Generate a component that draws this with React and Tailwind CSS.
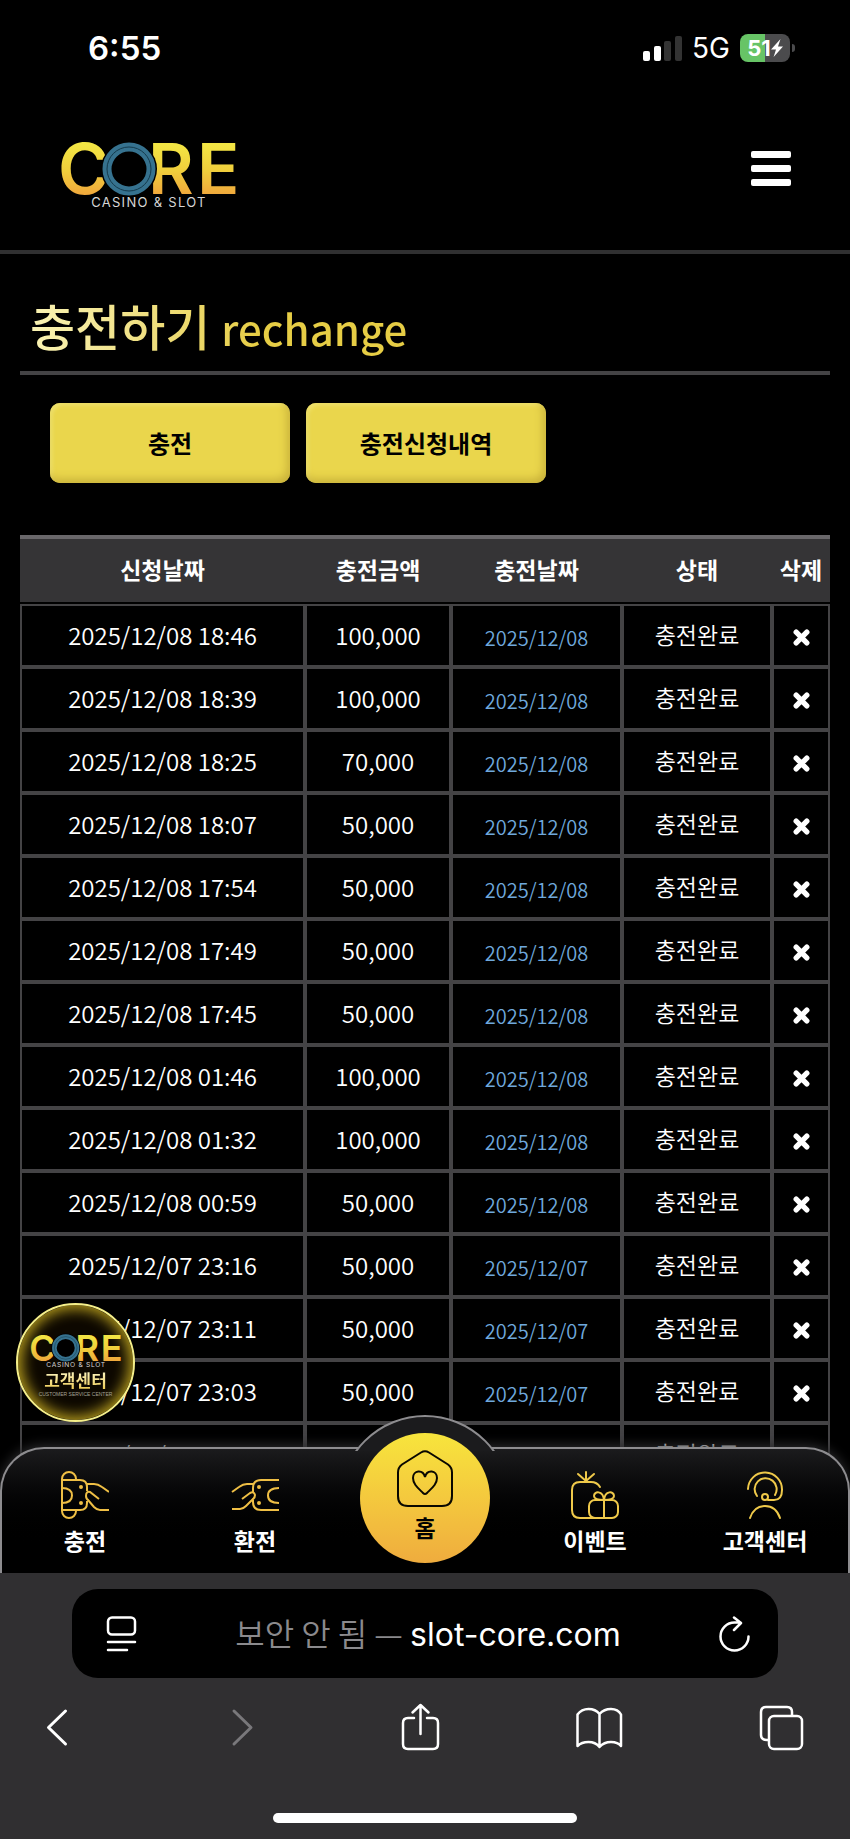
import { useId } from "react";

const ROWS = [
    { requested: "2025/12/08 18:46", amount: "100,000", charged: "2025/12/08" },
    { requested: "2025/12/08 18:39", amount: "100,000", charged: "2025/12/08" },
    { requested: "2025/12/08 18:25", amount: "70,000", charged: "2025/12/08" },
    { requested: "2025/12/08 18:07", amount: "50,000", charged: "2025/12/08" },
    { requested: "2025/12/08 17:54", amount: "50,000", charged: "2025/12/08" },
    { requested: "2025/12/08 17:49", amount: "50,000", charged: "2025/12/08" },
    { requested: "2025/12/08 17:45", amount: "50,000", charged: "2025/12/08" },
    { requested: "2025/12/08 01:46", amount: "100,000", charged: "2025/12/08" },
    { requested: "2025/12/08 01:32", amount: "100,000", charged: "2025/12/08" },
    { requested: "2025/12/08 00:59", amount: "50,000", charged: "2025/12/08" },
    { requested: "2025/12/07 23:16", amount: "50,000", charged: "2025/12/07" },
    { requested: "2025/12/07 23:11", amount: "50,000", charged: "2025/12/07" },
    { requested: "2025/12/07 23:03", amount: "50,000", charged: "2025/12/07" },
    { requested: "2025/12/07 22:05", amount: "30,000", charged: "2025/12/07" },
];

function StatusBar() {
    return (
        <div className="flex h-24 items-center justify-between pl-[88px] pr-[55px] font-['Inter',sans-serif]">
            <span className="text-[33px] font-semibold leading-none">6:55</span>
            <div className="flex items-center gap-[10px]">
                <svg className="h-[25px] w-[39px]" viewBox="0 0 39 25" fill="#fff" aria-hidden="true">
                    <rect x="0" y="15" width="7" height="10" rx="2" />
                    <rect x="11" y="10" width="7" height="15" rx="2" />
                    <rect x="21" y="5" width="7" height="20" rx="2" fill="#333" />
                    <rect x="32" y="0" width="7" height="25" rx="2" fill="#333" />
                </svg>
                <span className="text-[28px] leading-none">5G</span>
                <div className="flex items-center gap-[2px]">
                    <div className="flex h-7 w-[50px] items-center justify-center rounded-lg bg-linear-to-r from-[#67c466] from-50% to-[#4b4b4d] to-50%">
                        <span className="text-[22px] font-bold leading-none">51</span>
                        <svg className="h-[18px] w-3" viewBox="0 0 12 18" fill="#fff" aria-hidden="true">
                            <path d="M9.5 0 0 10.4h5L2.6 18 12 7.4H7z" />
                        </svg>
                    </div>
                    <div className="h-2 w-[3px] rounded-r-full bg-[#4b4b4d]"></div>
                </div>
            </div>
        </div>
    );
}

function Logo({ className }) {
    const id = useId();
    return (
        <svg className={className} viewBox="0 0 178 68" overflow="visible" role="img" aria-label="CORE CASINO & SLOT">
            <defs>
                <linearGradient id={id} gradientUnits="userSpaceOnUse" x1="0" y1="4" x2="0" y2="56">
                    <stop offset="0" stopColor="#f3e644" />
                    <stop offset="0.5" stopColor="#f0cf3c" />
                    <stop offset="1" stopColor="#f0a63c" />
                </linearGradient>
            </defs>
            <g fill={`url(#${id})`} fontFamily="Inter, sans-serif" fontSize="70" fontWeight="600">
                <text x="-2" y="54">C</text>
                <text x="88" y="54">R</text>
                <text x="137" y="54">E</text>
            </g>
            {/* ring */}
            <circle cx="69" cy="29" r="28" fill="#000" />
            <circle cx="69" cy="29" r="22" fill="none" stroke="#36728f" strokeWidth="9" />
            <circle cx="69" cy="29" r="22" fill="none" stroke="#143a4c" strokeWidth="1" />
            <text x="89" y="67" fill="#d6d6d6" fontFamily="Inter, sans-serif" fontSize="13" textAnchor="middle" className="tracking-widest">
                CASINO &amp; SLOT
            </text>
        </svg>
    );
}

function Header() {
    return (
        <header className="flex h-[158px] items-start justify-between border-b-4 border-[#303031] pl-[60px] pr-[59px] pt-11">
            <a href="#home" className="block">
                <Logo className="h-[68px] w-[178px]" />
            </a>
            <button type="button" aria-label="메뉴" className="flex w-10 flex-col gap-[7px] pt-[11px]">
                <span className="h-[7px] w-full rounded-xs bg-white"></span>
                <span className="h-[7px] w-full rounded-xs bg-white"></span>
                <span className="h-[7px] w-full rounded-xs bg-white"></span>
            </button>
        </header>
    );
}

function CloseIcon() {
    return (
        <svg className="size-[17px]" viewBox="0 0 16 16" stroke="#fff" strokeWidth="5" strokeLinecap="round" aria-hidden="true">
            <path d="M3 3 13 13M13 3 3 13" />
        </svg>
    );
}

function HistoryTable() {
    return (
        <table className="mt-[52px] w-full table-fixed border-separate border-spacing-0 text-center text-2xl">
            <colgroup>
                <col className="w-[285px]" />
                <col className="w-[146px]" />
                <col className="w-[171px]" />
                <col />
                <col className="w-[58px]" />
            </colgroup>
            <thead>
                <tr className="h-[69px] bg-[#353436]">
                    {["신청날짜", "충전금액", "충전날짜", "상태", "삭제"].map((label) => (
                        <th key={label} className="whitespace-nowrap border-b-2 border-t-4 border-b-black border-t-[#69676a] p-0 pb-[2px] text-[23px] font-bold">
                            {label}
                        </th>
                    ))}
                </tr>
            </thead>
            <tbody className="font-[350]">
                {ROWS.map((row) => (
                    <tr key={row.requested} className="h-[63px]">
                        <td className="border-2 border-[#444345] p-0 pb-[2px]">{row.requested}</td>
                        <td className="border-2 border-[#444345] p-0 pb-[2px]">{row.amount}</td>
                        <td className="border-2 border-[#444345] p-0 pt-1 text-xl text-[#6fa8dc]">{row.charged}</td>
                        <td className="border-2 border-[#444345] p-0 pb-[2px] text-[23px]">충전완료</td>
                        <td className="border-2 border-[#444345] p-0">
                            <button type="button" aria-label="삭제" className="block w-full pt-1">
                                <span className="flex justify-center"><CloseIcon /></span>
                            </button>
                        </td>
                    </tr>
                ))}
            </tbody>
        </table>
    );
}

function SupportBadge() {
    return (
        <a
            href="#support"
            className="absolute bottom-[151px] left-4 flex size-[119px] flex-col items-center rounded-full border-2 border-[#f5ef8a] bg-[#0d0800] pt-7 shadow-[inset_0_0_14px_4px_#b39a1c]"
        >
            <Logo className="h-[35px] w-[92px]" />
            <span className="bg-linear-to-b from-[#fdfbd0] to-[#ecc63c] bg-clip-text text-[17px] font-bold leading-6 text-transparent">고객센터</span>
            <span className="whitespace-nowrap font-['Liberation_Sans',sans-serif] text-[5px] leading-none text-[#a5a194]">CUSTOMER SERVICE CENTER</span>
        </a>
    );
}

function DepositIcon() {
    return (
        <svg className="size-12" viewBox="0 0 48 48" fill="none" stroke="#efbf45" strokeWidth="2" aria-hidden="true">
            <path d="M15 9V8a7 7 0 0 0-14 0v32a7 7 0 0 0 14 0v-1" />
            <path d="M1 9h18q7 0 7 7v4M1 39h18q7 0 7-7v-2M1 17q10 0 10 7.500T1 32" />
            <path d="M26 13h7q4 0 8 3l7 5M27 29l6 7q3 3 6 3h9M38 28l-9-7q-4-1-4 4 0 3 3 5" />
            <circle cx="20" cy="16" r="1" fill="#efbf45" />
            <circle cx="20" cy="32" r="1" fill="#efbf45" />
        </svg>
    );
}

function WithdrawIcon() {
    return (
        <svg className="size-12" viewBox="0 0 48 48" fill="none" stroke="#efbf45" strokeWidth="2" aria-hidden="true">
            <path d="M48 9H30q-8 0-8 8v4M48 39H30q-8 0-8-8v-2M48 17q-11 0-11 7.500T48 32" />
            <path d="M22 13h-6q-4 0-8 3l-7 5M22 28l-7 7q-3 3-6 3H1M11 28l8-6q4-2 5 2 0 3-3 5" />
            <circle cx="28" cy="16" r="1" fill="#efbf45" />
            <circle cx="28" cy="32" r="1" fill="#efbf45" />
        </svg>
    );
}

function EventIcon() {
    return (
        <svg className="size-12" viewBox="0 0 48 48" fill="none" stroke="#efc94a" strokeWidth="2" strokeLinecap="round" aria-hidden="true">
            <path d="M29 16q-3-5-9-5H9q-8 0-8 8v20q0 8 8 8h30" />
            <path d="M15 11V1M15 10 7 3M15 10l8-7" />
            <rect x="18" y="29" width="29" height="18" rx="6" />
            <path d="M33 29v18M33 29c-3 0-10 0-10-4 0-5 9-6 10 4 1-10 10-9 10-4 0 4-7 4-10 4" />
        </svg>
    );
}

function SupportIcon() {
    return (
        <svg className="size-12" viewBox="0 0 48 48" fill="none" stroke="#efc94a" strokeWidth="2" strokeLinecap="round" aria-hidden="true">
            <path d="M7 18a17 17 0 1 1 34 1q0 10-8 10h-6" />
            <path d="M16 25a11 11 0 1 1 18-1" />
            <circle cx="24" cy="26" r="3" />
            <path d="M9 47q4-12 15-12t15 12" />
        </svg>
    );
}

function HomeIcon() {
    return (
        <svg className="h-[57px] w-14" viewBox="0 0 56 57" fill="none" stroke="#0a0800" strokeWidth="2" aria-hidden="true">
            <path d="M24 2.500q4-2.500 8 0l19 12q4 3 4 8V46q0 10-10 10H11Q1 56 1 46V22.500q0-5 4-8z" />
            <path d="M28 27c2-8 12-7 12 1 0 6-5 10-10 15q-2 2-4 0C21 38 16 34 16 28c0-8 10-9 12-1z" />
        </svg>
    );
}

function TabItem({ icon, label }) {
    return (
        <a href={`#${label}`} className="flex flex-col items-center gap-[3px] pt-[22px]">
            {icon}
            <span className="whitespace-nowrap text-[23px] font-bold leading-9">{label}</span>
        </a>
    );
}

function BottomNav() {
    return (
        <nav className="absolute inset-x-0 bottom-0 h-[126px] rounded-t-[44px] border-x-2 border-t-2 border-[#8d8c8f] bg-linear-to-b from-[#1b1b1d] to-black to-80% shadow-[0_-2px_12px_#2a2a2c]">
            {/* bump behind the home button */}
            <div className="absolute -top-[34px] left-1/2 h-9 w-[172px] -translate-x-1/2 overflow-hidden">
                <div className="size-[172px] rounded-full border-2 border-[#8d8c8f] bg-[#1b1b1d]"></div>
            </div>
            <div className="-mx-[2px] grid grid-cols-5">
                <TabItem icon={<DepositIcon />} label="충전" />
                <TabItem icon={<WithdrawIcon />} label="환전" />
                <div className="relative flex justify-center">
                    <a
                        href="#home"
                        className="absolute -top-4 flex size-[130px] flex-col items-center rounded-full bg-linear-to-b from-[#f7e53c] to-[#efac3e] pt-[17px] text-black"
                    >
                        <HomeIcon />
                        <span className="pt-[2px] text-[23px] font-bold leading-9">홈</span>
                    </a>
                </div>
                <TabItem icon={<EventIcon />} label="이벤트" />
                <TabItem icon={<SupportIcon />} label="고객센터" />
            </div>
        </nav>
    );
}

function BrowserBar() {
    return (
        <footer className="bg-[#302f31] pb-4 pt-4">
            <div className="mx-[72px] flex h-[89px] items-center justify-between rounded-[26px] bg-black pl-[34px] pr-7">
                <button type="button" aria-label="페이지 설정">
                    <svg className="h-9 w-[31px]" viewBox="0 0 31 36" fill="none" stroke="#fff" strokeWidth="2.500" strokeLinecap="round">
                        <rect x="2" y="1.500" width="27" height="17" rx="4" />
                        <path d="M2 26h27M2 34h19" />
                    </svg>
                </button>
                <p className="whitespace-nowrap text-[32px] leading-none">
                    <span className="font-[350] text-[#8b8a8d]">보안 안 됨 — </span>
                    <span className="font-['Inter',sans-serif]">slot-core.com</span>
                </p>
                <button type="button" aria-label="새로고침">
                    <svg className="h-9 w-[31px]" viewBox="0 0 31 36" fill="none" stroke="#fff" strokeWidth="2.500" strokeLinecap="round" strokeLinejoin="round">
                        <path d="M29.500 20.500A14 14 0 1 1 15.500 6.500h6M15 1.500l7 5.500-7 7" />
                    </svg>
                </button>
            </div>
            <div className="flex h-[98px] items-center justify-between pl-[33px] pr-[46px]">
                <button type="button" aria-label="뒤로">
                    <svg className="size-12" viewBox="0 0 48 48" fill="none" stroke="#fff" strokeWidth="3" strokeLinecap="round" strokeLinejoin="round">
                        <path d="M32.500 8 15.500 24.500l17 16.500" />
                    </svg>
                </button>
                <button type="button" aria-label="앞으로">
                    <svg className="size-12" viewBox="0 0 48 48" fill="none" stroke="#79787b" strokeWidth="3" strokeLinecap="round" strokeLinejoin="round">
                        <path d="M20 8l17 16.500L20 41" />
                    </svg>
                </button>
                <button type="button" aria-label="공유">
                    <svg className="size-12" viewBox="0 0 48 48" fill="none" stroke="#fff" strokeWidth="2.500" strokeLinecap="round" strokeLinejoin="round">
                        <path d="M19 15h-6q-5 0-5 5v21q0 5 5 5h25q5 0 5-5V20q0-5-5-5h-6M25.500 31V2M17.500 9.500l8-7.500 8 7.500" />
                    </svg>
                </button>
                <button type="button" aria-label="책갈피">
                    <svg className="size-12" viewBox="0 0 48 48" fill="none" stroke="#fff" strokeWidth="2.500" strokeLinejoin="round">
                        <path d="M24.500 11Q20.500 6 13.500 6T2.500 11.500V43q4-4 11-4t11 5q4.500-5 11.500-5t10 4V11.500Q43 6 36 6T24.500 11zM24.500 11v33" />
                    </svg>
                </button>
                <button type="button" aria-label="탭 보기">
                    <svg className="size-12" viewBox="0 0 48 48" fill="none" stroke="#fff" strokeWidth="2.500">
                        <rect x="13" y="13" width="33" height="33" rx="5" />
                        <path d="M13 37h-2q-6 0-6-5V9q0-5 5-5h21q5 0 5 5v4" />
                    </svg>
                </button>
            </div>
            <div className="mx-auto mt-[37px] h-[10px] w-[304px] rounded-full bg-white"></div>
        </footer>
    );
}

function App() {
    return (
        <div className="flex h-screen flex-col bg-black font-['Noto_Sans_CJK_KR',sans-serif] text-white">
            <div className="relative flex-1 overflow-hidden">
                <StatusBar />
                <Header />
                <main className="px-5">
                    <div className="border-b-4 border-[#444345] px-[10px] pb-2 pt-9">
                        <h1 className="inline-block bg-linear-to-r from-[#faf3b4] to-[#e6cd45] to-60% bg-clip-text text-[49px] font-medium leading-[70px] text-transparent">
                            충전하기 <small className="text-[42px]">rechange</small>
                        </h1>
                    </div>
                    <div className="flex gap-4 px-[30px] pt-7">
                        <button type="button" className="h-20 w-60 rounded-[10px] bg-[#ead64c] text-2xl font-bold text-black shadow-[inset_-3px_-4px_8px_#c9b23a,inset_2px_2px_4px_#f5ea7a]">
                            충전
                        </button>
                        <button type="button" className="h-20 w-60 rounded-[10px] bg-[#ead64c] text-2xl font-bold text-black shadow-[inset_-3px_-4px_8px_#c9b23a,inset_2px_2px_4px_#f5ea7a]">
                            충전신청내역
                        </button>
                    </div>
                    <HistoryTable />
                </main>
                <SupportBadge />
                <BottomNav />
            </div>
            <BrowserBar />
        </div>
    );
}

export default App;
